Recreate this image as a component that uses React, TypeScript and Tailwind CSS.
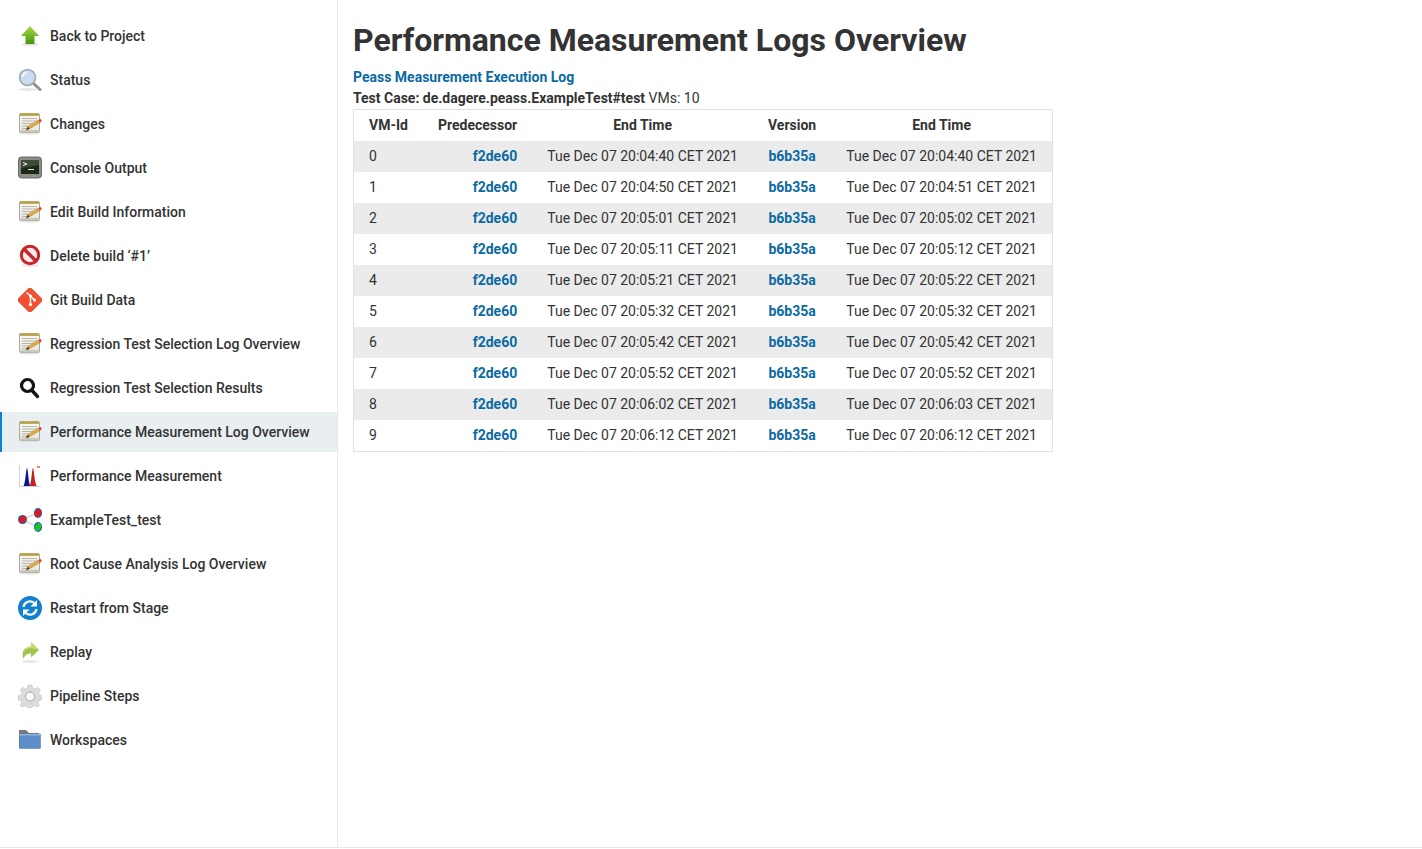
import React from 'react'

const Notepad = ({ id }: { id: string }) => (
  <svg width="24" height="24" viewBox="0 0 24 24">
    <defs>
      <linearGradient id={id} x1="0" y1="0" x2="0" y2="1">
        <stop offset="0" stopColor="#fbfaf3" />
        <stop offset="1" stopColor="#e6e4da" />
      </linearGradient>
    </defs>
    <ellipse cx="11.500" cy="21.500" rx="10" ry="1" fill="#e4e4e4" />
    <rect x="1.500" y="1.500" width="20" height="19" rx="1" fill={`url(#${id})`} stroke="#a8a89e" />
    <rect x="2" y="1" width="19" height="3" fill="#c8b45e" />
    <path d="M3 1.500v2M5 1.500v2M7 1.500v2M9 1.500v2M11 1.500v2M13 1.500v2M15 1.500v2M17 1.500v2M19 1.500v2" stroke="#857a3f" strokeWidth="0.600" />
    <path d="M4 6.500h15M4 9h15M4 11.500h11M4 14h7M4 16.500h5" stroke="#a9a9a3" strokeWidth="0.800" />
    <rect x="1.500" y="18" width="20" height="2.500" fill="#c9c8c0" />
    <path d="M8 18l2-3.600 10.500-6.400 1.600 2.500-10.500 6.200z" fill="#e3ae45" stroke="#8a6a20" strokeWidth="0.400" />
    <path d="M20.500 8l2-1.200 1.300 2.200-1.700 1.500z" fill="#d9423a" />
    <path d="M8 18l2-3.600 1.600 2.700z" fill="#4a4030" />
  </svg>
)

const Arrow = () => (
  <svg width="24" height="24" viewBox="0 0 24 24">
    <defs>
      <linearGradient id="up" x1="0" y1="0" x2="0" y2="1">
        <stop offset="0" stopColor="#a8dc4a" />
        <stop offset="1" stopColor="#45940c" />
      </linearGradient>
    </defs>
    <ellipse cx="12" cy="20.500" rx="9" ry="1.300" fill="#e2e2e2" />
    <path d="M12 2l9 10h-4.500v8h-9v-8H3z" fill="url(#up)" />
  </svg>
)

const Lens = () => (
  <svg width="24" height="24" viewBox="0 0 24 24">
    <ellipse cx="10" cy="21.500" rx="9.500" ry="1.500" fill="#e6e6e6" />
    <path d="M15 15l7 6.500" stroke="#8f8f8f" strokeWidth="3" strokeLinecap="round" />
    <circle cx="9.500" cy="9.500" r="8" fill="#c9dcf2" stroke="#a5a9ad" strokeWidth="1.600" />
    <path d="M4.500 9a5.500 5.500 0 0 1 4.500-4.500" stroke="#fff" strokeWidth="1.500" fill="none" />
  </svg>
)

const Terminal = () => (
  <svg width="24" height="24" viewBox="0 0 24 24">
    <rect x="0.500" y="1" width="23" height="21" rx="3" fill="#8c8c86" stroke="#6c6c68" />
    <rect x="3" y="4" width="18" height="14" fill="#1d2a18" />
    <path d="M3 4h18v5L3 12z" fill="#3f4d36" />
    <path d="M5 6.500l4 1.500-4 1.500" stroke="#e6e6e6" strokeWidth="1" fill="none" />
    <path d="M10 13.500h6" stroke="#e6e6e6" strokeWidth="1" />
    <circle cx="16" cy="20" r="0.700" fill="#8fe04a" />
  </svg>
)

const NoEntry = () => (
  <svg width="24" height="24" viewBox="0 0 24 24">
    <ellipse cx="12" cy="21.500" rx="9" ry="1.300" fill="#e4e4e4" />
    <circle cx="12" cy="11" r="8.700" fill="#f4eeee" stroke="#c9242a" strokeWidth="3" />
    <path d="M6 5l12 12" stroke="#c9242a" strokeWidth="3.400" />
  </svg>
)

const GitLogo = () => (
  <svg width="24" height="24" viewBox="0 0 24 24">
    <rect x="2.500" y="2.500" width="19" height="19" rx="2" fill="#f05133" transform="rotate(45 12 12)" />
    <path d="M8.500 4.500l4 3.500M12.500 8v8.500M12.500 8l4 4" stroke="#fff" strokeWidth="1.400" />
    <circle cx="12.500" cy="8" r="1.600" fill="#fff" />
    <circle cx="12.500" cy="16.500" r="1.600" fill="#fff" />
    <circle cx="16.500" cy="12" r="1.600" fill="#fff" />
  </svg>
)

const SearchBlack = () => (
  <svg width="24" height="24" viewBox="0 0 24 24">
    <circle cx="9.500" cy="9.500" r="6" fill="none" stroke="#111" strokeWidth="3.200" />
    <path d="M14.500 15l5 5.500" stroke="#111" strokeWidth="3.400" strokeLinecap="round" />
  </svg>
)

const Peaks = () => (
  <svg width="24" height="24" viewBox="0 0 24 24">
    <path d="M1.500 1v22M1 22.500h22" stroke="#d5d5d5" strokeWidth="1" />
    <path d="M5.500 22c2-2 2.500-18 3.500-18s1.500 16 3.500 18z" fill="#0a148c" />
    <path d="M11.500 22c2-2 2.500-18 3.500-18s1.500 16 4 18z" fill="#c2221f" />
    <rect x="19" y="2" width="3" height="2" fill="#e58a8a" />
  </svg>
)

const Nodes = () => (
  <svg width="24" height="24" viewBox="0 0 24 24">
    <path d="M4 11.500L20 5M4 11.500l16 7.500" stroke="#d8d8d8" strokeWidth="1.500" />
    <circle cx="4.500" cy="11.500" r="4.500" fill="#1f62a8" />
    <ellipse cx="4.500" cy="11.500" rx="3" ry="4" fill="#e0181c" transform="rotate(35 4.500 11.500)" />
    <ellipse cx="20" cy="5" rx="4" ry="5" fill="#1f62a8" />
    <ellipse cx="20" cy="5" rx="3" ry="4.200" fill="#e0181c" transform="rotate(30 20 5)" />
    <ellipse cx="20" cy="19" rx="4" ry="5" fill="#1f62a8" />
    <ellipse cx="20" cy="19" rx="3" ry="4.200" fill="#1fc02c" transform="rotate(30 20 19)" />
  </svg>
)

const Restart = () => (
  <svg width="24" height="24" viewBox="0 0 24 24">
    <circle cx="12" cy="12" r="12" fill="#1280cf" />
    <path d="M5.500 11a6.500 6.500 0 0 1 10.800-4" fill="none" stroke="#fff" strokeWidth="2.200" />
    <path d="M19 4v6.500h-6.500z" fill="#fff" />
    <path d="M18.500 13a6.500 6.500 0 0 1-10.800 4" fill="none" stroke="#fff" strokeWidth="2.200" />
    <path d="M5 20v-6.500h6.500z" fill="#fff" />
  </svg>
)

const Replay = () => (
  <svg width="24" height="24" viewBox="0 0 24 24">
    <ellipse cx="12" cy="21.500" rx="8" ry="1.500" fill="#e6e6e6" />
    <path d="M13 2l8 8-8 7.500V13.500c-4 0-6 1.500-7.500 5.500C3 12 6 7 13 6.500z" fill="#a3c24e" />
    <path d="M13 2l8 8-8-2c-4 0-6.500 2.500-8 6 .5-4 3.500-7.500 8-7.500z" fill="#c5dc6d" />
  </svg>
)

const Gear = () => (
  <svg width="24" height="24" viewBox="0 0 24 24">
    <path
      d="M10 1h4l.6 3 2.500 1 2.600-1.700 2.800 2.800L20.800 8.700l1 2.500 2.200.6v4l-3 .6-1 2.500 1.700 2.400-2.800 1.700-2.300-1.300-2.500 1-.6 1.300h-3.500l-.6-1.300-2.500-1L5 23l-2.800-1.700 1.700-2.400-1-2.500-2.900-.6v-4l2.900-.6 1-2.500L2.200 6.100 5 3.300l2.400 1.700 2-1z"
      fill="#dcdcdc"
      stroke="#b8b8b8"
      strokeWidth="0.500"
    />
    <circle cx="12" cy="12.500" r="4.500" fill="#fafafa" stroke="#a5a5a5" />
  </svg>
)

const Folder = () => (
  <svg width="24" height="24" viewBox="0 0 24 24">
    <path d="M1 2h7l3 3h10v14H1z" fill="#77797c" />
    <rect x="1.500" y="6" width="21" height="14.500" fill="#5f8fc8" stroke="#4c76a8" strokeWidth="0.500" />
    <rect x="1.500" y="6" width="21" height="1.500" fill="#8fb4de" />
  </svg>
)

const items: { label: string; icon: React.ReactNode; active?: boolean }[] = [
  { label: 'Back to Project', icon: <Arrow /> },
  { label: 'Status', icon: <Lens /> },
  { label: 'Changes', icon: <Notepad id="n1" /> },
  { label: 'Console Output', icon: <Terminal /> },
  { label: 'Edit Build Information', icon: <Notepad id="n2" /> },
  { label: 'Delete build ‘#1’', icon: <NoEntry /> },
  { label: 'Git Build Data', icon: <GitLogo /> },
  { label: 'Regression Test Selection Log Overview', icon: <Notepad id="n3" /> },
  { label: 'Regression Test Selection Results', icon: <SearchBlack /> },
  { label: 'Performance Measurement Log Overview', icon: <Notepad id="n4" />, active: true },
  { label: 'Performance Measurement', icon: <Peaks /> },
  { label: 'ExampleTest_test', icon: <Nodes /> },
  { label: 'Root Cause Analysis Log Overview', icon: <Notepad id="n5" /> },
  { label: 'Restart from Stage', icon: <Restart /> },
  { label: 'Replay', icon: <Replay /> },
  { label: 'Pipeline Steps', icon: <Gear /> },
  { label: 'Workspaces', icon: <Folder /> },
]

const rows = [
  ['20:04:40', '20:04:40'],
  ['20:04:50', '20:04:51'],
  ['20:05:01', '20:05:02'],
  ['20:05:11', '20:05:12'],
  ['20:05:21', '20:05:22'],
  ['20:05:32', '20:05:32'],
  ['20:05:42', '20:05:42'],
  ['20:05:52', '20:05:52'],
  ['20:06:02', '20:06:03'],
  ['20:06:12', '20:06:12'],
]

export default function App() {
  return (
    <div className="h-[849px] overflow-hidden bg-white font-['Roboto',sans-serif] text-sm text-[#333] flex flex-col">
      <div className="flex h-[848px] border-b border-[#e9e9e9]">
        {/* Sidebar */}
        <div className="w-[338px] shrink-0 border-r border-[#eaeaea] pt-4 flex flex-col gap-1">
          {items.map((item) => (
            <a
              key={item.label}
              className={`flex items-center h-10 gap-[8px] font-medium ${
                item.active ? 'bg-[#e9eef1] border-l-2 border-[#0b84d0] pl-4' : 'pl-[18px]'
              }`}
            >
              <span className="w-6 h-6 shrink-0">{item.icon}</span>
              <span>{item.label}</span>
            </a>
          ))}
        </div>

        {/* Main */}
        <div className="pl-[15px] pt-5">
          <h1 className="text-[32px] leading-[41px] font-bold">Performance Measurement Logs Overview</h1>
          <a className="block mt-[6px] leading-[21px] font-bold text-[#0b6aa2]">Peass Measurement Execution Log</a>
          <div className="leading-[21px]">
            <span className="font-bold">Test Case: de.dagere.peass.ExampleTest#test</span> VMs: 10
          </div>
          <table className="w-[700px] border border-[#e2e2e2] border-separate border-spacing-0">
            <thead>
              <tr className="h-[31px]">
                <th className="px-[15px] pb-[2px] font-bold text-left">VM-Id</th>
                <th className="px-[15px] pb-[2px] font-bold text-right">Predecessor</th>
                <th className="px-[15px] pb-[2px] font-bold text-center">End Time</th>
                <th className="px-[15px] pb-[2px] font-bold text-center">Version</th>
                <th className="px-[15px] pb-[2px] font-bold text-center">End Time</th>
              </tr>
            </thead>
            <tbody>
              {rows.map((r, i) => (
                <tr key={i} className={`h-[31px] ${i % 2 === 0 ? 'bg-[#ebebeb]' : ''}`}>
                  <td className="px-[15px] pb-[2px]">{i}</td>
                  <td className="px-[15px] pb-[2px] text-right font-bold text-[#0b6aa2]">f2de60</td>
                  <td className="px-[15px] pb-[2px] text-center">Tue Dec 07 {r[0]} CET 2021</td>
                  <td className="px-[15px] pb-[2px] text-center font-bold text-[#0b6aa2]">b6b35a</td>
                  <td className="px-[15px] pb-[2px] text-center">Tue Dec 07 {r[1]} CET 2021</td>
                </tr>
              ))}
            </tbody>
          </table>
        </div>
      </div>
    </div>
  )
}
